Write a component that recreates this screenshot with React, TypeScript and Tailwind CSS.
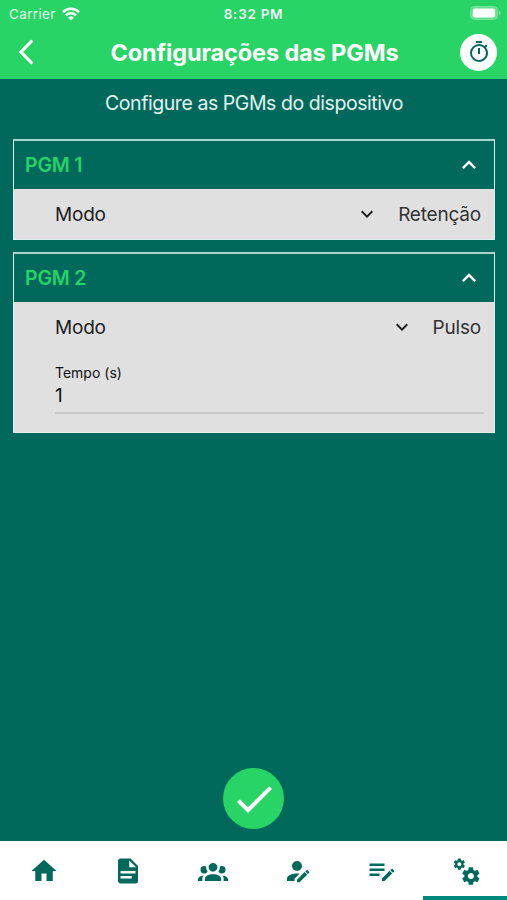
import React from 'react';

const icons = {
  home: 'M10,20V14H14V20H19V12H22L12,3L2,12H5V20H10Z',
  document:
    'M13,9H18.5L13,3.5V9M6,2H14L20,8V20A2,2 0 0,1 18,22H6C4.89,22 4,21.1 4,20V4C4,2.89 4.89,2 6,2M15,18V16H6V18H15M18,14V12H6V14H18Z',
  group:
    'M12,5.5A3.5,3.5 0 0,1 15.5,9A3.5,3.5 0 0,1 12,12.5A3.5,3.5 0 0,1 8.5,9A3.5,3.5 0 0,1 12,5.5M5,8C5.56,8 6.08,8.15 6.53,8.42C6.38,9.85 6.8,11.27 7.66,12.38C7.16,13.34 6.16,14 5,14A3,3 0 0,1 2,11A3,3 0 0,1 5,8M19,8A3,3 0 0,1 22,11A3,3 0 0,1 19,14C17.84,14 16.84,13.34 16.34,12.38C17.2,11.27 17.62,9.85 17.47,8.42C17.92,8.15 18.44,8 19,8M5.5,18.25C5.5,16.18 8.41,14.5 12,14.5C15.59,14.5 18.5,16.18 18.5,18.25V20H5.5V18.25M0,20V18.5C0,17.11 1.89,15.94 4.45,15.6C3.86,16.28 3.5,17.22 3.5,18.25V20H0M24,20H20.5V18.25C20.5,17.22 20.14,16.28 19.55,15.6C22.11,15.94 24,17.11 24,18.5V20Z',
  accountEdit:
    'M21.7,13.35L20.7,14.35L18.65,12.3L19.65,11.3C19.86,11.09 20.21,11.09 20.42,11.3L21.7,12.58C21.91,12.79 21.91,13.14 21.7,13.35M12,18.94L18.06,12.88L20.11,14.93L14.06,21H12V18.94M12,14C7.58,14 4,15.79 4,18V20H10V18.11L14,14.11C13.34,14.03 12.67,14 12,14M12,4A4,4 0 0,0 8,8A4,4 0 0,0 12,12A4,4 0 0,0 16,8A4,4 0 0,0 12,4Z',
  listEdit:
    'M2,6V8H14V6H2M2,10V12H14V10H2M20.04,10.13C19.9,10.13 19.76,10.19 19.65,10.3L18.65,11.3L20.7,13.35L21.7,12.35C21.92,12.14 21.92,11.79 21.7,11.58L20.42,10.3C20.31,10.19 20.18,10.13 20.04,10.13M18.07,11.88L12,17.94V20H14.06L20.12,13.93L18.07,11.88M2,14V16H10V14H2Z',
  cogs:
    'M15.9,18.45C17.25,18.45 18.35,17.35 18.35,16C18.35,14.65 17.25,13.55 15.9,13.55C14.54,13.55 13.45,14.65 13.45,16C13.45,17.35 14.54,18.45 15.9,18.45M21.1,16.68L22.58,17.84C22.71,17.95 22.75,18.13 22.66,18.29L21.26,20.71C21.17,20.86 21,20.92 20.83,20.86L19.09,20.16C18.73,20.44 18.33,20.67 17.91,20.85L17.64,22.7C17.62,22.87 17.47,23 17.3,23H14.5C14.32,23 14.18,22.87 14.15,22.7L13.89,20.85C13.46,20.67 13.07,20.44 12.71,20.16L10.96,20.86C10.81,20.92 10.62,20.86 10.54,20.71L9.14,18.29C9.05,18.13 9.09,17.95 9.22,17.84L10.7,16.68L10.65,16L10.7,15.31L9.22,14.16C9.09,14.05 9.05,13.86 9.14,13.71L10.54,11.29C10.62,11.13 10.81,11.07 10.96,11.13L12.71,11.84C13.07,11.56 13.46,11.32 13.89,11.15L14.15,9.29C14.18,9.13 14.32,9 14.5,9H17.3C17.47,9 17.62,9.13 17.64,9.29L17.91,11.15C18.33,11.32 18.73,11.56 19.09,11.84L20.83,11.13C21,11.07 21.17,11.13 21.26,11.29L22.66,13.71C22.75,13.86 22.71,14.05 22.58,14.16L21.1,15.31L21.15,16L21.1,16.68M6.69,8.07C7.56,8.07 8.26,7.37 8.26,6.5C8.26,5.63 7.56,4.92 6.69,4.92A1.58,1.58 0 0,0 5.11,6.5C5.11,7.37 5.82,8.07 6.69,8.07M10.03,6.94L11,7.68C11.07,7.75 11.09,7.87 11.03,7.97L10.13,9.53C10.08,9.63 9.96,9.67 9.86,9.63L8.74,9.18L8,9.62L7.81,10.81C7.79,10.92 7.7,11 7.59,11H5.79C5.67,11 5.58,10.92 5.56,10.81L5.4,9.62L4.64,9.18L3.52,9.63C3.41,9.67 3.3,9.63 3.24,9.53L2.34,7.97C2.28,7.87 2.31,7.75 2.39,7.68L3.34,6.94L3.31,6.5L3.34,6.06L2.39,5.32C2.31,5.25 2.28,5.13 2.34,5.03L3.24,3.47C3.3,3.37 3.41,3.33 3.52,3.37L4.63,3.82L5.4,3.38L5.56,2.19C5.58,2.08 5.67,2 5.79,2H7.59C7.7,2 7.79,2.08 7.81,2.19L8,3.38L8.74,3.82L9.86,3.37C9.96,3.33 10.08,3.37 10.13,3.47L11.03,5.03C11.09,5.13 11.07,5.25 11,5.32L10.03,6.06L10.06,6.5L10.03,6.94Z',
  timer:
    'M12,20A7,7 0 0,1 5,13A7,7 0 0,1 12,6A7,7 0 0,1 19,13A7,7 0 0,1 12,20M19.03,7.39L20.45,5.97C20,5.46 19.55,5 19.04,4.56L17.62,6C16.07,4.74 14.12,4 12,4A9,9 0 0,0 3,13A9,9 0 0,0 12,22C17,22 21,17.97 21,13C21,10.88 20.26,8.93 19.03,7.39M11,14H13V8H11M15,1H9V3H15V1Z',
  check: 'M21,7L9,19L3.5,13.5L4.91,12.09L9,16.17L19.59,5.59L21,7Z',
  up: 'M7.41,15.41L12,10.83L16.59,15.41L18,14L12,8L6,14L7.41,15.41Z',
  down: 'M7.41,8.58L12,13.17L16.59,8.58L18,10L12,16L6,10L7.41,8.58Z',
};

type IconName = keyof typeof icons;

interface IconProps {
  name: IconName;
  className?: string;
}

const Icon: React.FC<IconProps> = ({ name, className }) => (
  <svg viewBox="0 0 24 24" fill="currentColor" className={className}>
    <path d={icons[name]} />
  </svg>
);

const StatusBar: React.FC = () => (
  <div className="grid h-7 grid-cols-3 items-center pl-[9px] pr-[9px] text-[13.5px]">
    <div className="flex items-center gap-[6px]">
      <span className="tracking-[0.35px] text-white/85">Carrier</span>
      <svg viewBox="0 0 18 14" className="mb-px h-[14px] w-[18px]" fill="none" stroke="white" strokeWidth="2.4">
        <path d="M1 5.1A11.4 11.4 0 0 1 17 5.1" />
        <path d="M3.9 8.3A7.3 7.3 0 0 1 14.1 8.3" />
        <path d="M9 13.6L6.2 10.7A4 4 0 0 1 11.8 10.7Z" fill="white" stroke="none" />
      </svg>
    </div>
    <span className="text-center font-semibold tracking-[0.7px] text-white/95">8:32 PM</span>
    <svg viewBox="0 0 31 14" className="-mr-[3px] mb-[2px] h-[14px] w-[31px] justify-self-end">
      <rect x="0.6" y="0.6" width="27" height="12.8" rx="4" fill="white" fillOpacity="0.25" stroke="white" strokeOpacity="0.3" />
      <rect x="2.7" y="2.5" width="22.5" height="9" rx="2" fill="white" />
      <path d="M29 4.8V9.2A2.4 2.4 0 0 0 29 4.8Z" fill="white" fillOpacity="0.5" />
    </svg>
  </div>
);

interface PanelProps {
  title: string;
  mode: string;
  children?: React.ReactNode;
}

const Panel: React.FC<PanelProps> = ({ title, mode, children }) => (
  <section className="border border-t-2 border-[#d9f0ee] border-t-[#a5d3ce] bg-[#e0e0e0]">
    <div className="flex h-12 items-center justify-between bg-[#00695c] pl-[11px] pr-[11px]">
      <h2 className="pt-px text-[19.5px] font-semibold tracking-[-0.2px] text-[#25d366]">{title}</h2>
      <Icon name="up" className="h-7 w-7 text-white" />
    </div>
    <div className="flex h-[50px] items-center pl-[41px] pr-[13px] text-[19px] tracking-[-0.2px] text-[#212121]">
      <span className="pt-[2px]">Modo</span>
      <Icon name="down" className="ml-auto mr-[19px] h-6 w-6" />
      <span className="pt-[2px] text-[#333]">{mode}</span>
    </div>
    {children}
  </section>
);

const tabs: IconName[] = ['home', 'document', 'group', 'accountEdit', 'listEdit', 'cogs'];

const App: React.FC = () => {
  return (
    <div className="flex h-[900px] w-[507px] flex-col overflow-hidden bg-[#00695c] font-['Inter','Liberation_Sans',sans-serif]">
      <header className="h-[79px] shrink-0 bg-[#28d466] text-white">
        <StatusBar />
        <div className="flex h-12 items-center justify-between pl-[17px] pr-[10px]">
          <svg viewBox="0 0 20 26" className="mr-[12px] h-[26px] w-[20px]" fill="none" stroke="white" strokeWidth="3.2" strokeLinecap="round">
            <path d="M14.3 2.5L4 13L14.3 23.5" />
          </svg>
          <h1 className="pt-[2px] text-[23.5px] font-bold tracking-[-0.13px]">Configurações das PGMs</h1>
          <button className="flex h-[37px] w-[37px] items-center justify-center rounded-full bg-white pl-px text-[#00695c]">
            <Icon name="timer" className="h-6 w-6" />
          </button>
        </div>
      </header>

      <main className="flex flex-1 flex-col pl-[13px] pr-[12px]">
        <p className="h-[60px] pt-[10px] text-center text-[19.5px] tracking-[-0.44px] text-[#e3f3f1]">
          Configure as PGMs do dispositivo
        </p>
        <div className="flex flex-col gap-3">
          <Panel title="PGM 1" mode="Retenção" />
          <Panel title="PGM 2" mode="Pulso">
            <div className="h-[80px] pl-[41px] pr-[10px] pt-3 text-[#111]">
              <label className="block text-[14px] leading-[18px]">Tempo (s)</label>
              <div className="h-8 border-b-2 border-[#c9c9c9] text-[19px] leading-[27px]">1</div>
            </div>
          </Panel>
        </div>
        <button className="mb-3 mr-px mt-auto flex h-[61px] w-[61px] items-center justify-center self-center rounded-full bg-[#28d466] text-white">
          <Icon name="check" className="h-12 w-12" />
        </button>
      </main>

      <nav className="grid h-[59px] shrink-0 grid-cols-6 bg-white text-[#00695c]">
        {tabs.map(tab => (
          <div
            key={tab}
            className={
              tab === 'cogs'
                ? 'flex justify-center border-b-4 border-[#00897b] pl-[2.5px] pt-[15px]'
                : 'flex justify-center pl-[2.5px] pt-[15px]'
            }
          >
            <Icon name={tab} className="h-[30px] w-[30px]" />
          </div>
        ))}
      </nav>
    </div>
  );
};

export default App;
